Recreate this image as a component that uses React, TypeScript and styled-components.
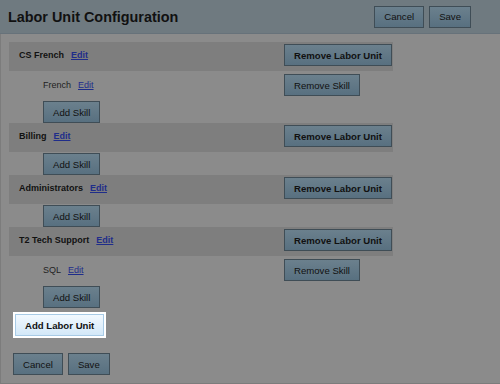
import React from "react";
import styled, { createGlobalStyle } from "styled-components";

const Global = createGlobalStyle`
  html, body {
    margin: 0;
    padding: 0;
    background: #8b8b8b;
    font-family: "Liberation Sans", Arial, sans-serif;
  }
`;

const Page = styled.div`
  width: 500px;
  height: 384px;
  display: flex;
  flex-direction: column;
  overflow: hidden;
`;

const Header = styled.div`
  height: 33px;
  flex-shrink: 0;
  display: flex;
  align-items: center;
  justify-content: space-between;
  padding: 0 29px 0 8px;
  background: #6f7a80;
  border-bottom: 1px solid #67727a;
`;

const Title = styled.h1`
  margin: 0;
  font-size: 14.4px;
  font-weight: bold;
  color: #111;
`;

const ButtonRow = styled.div`
  display: flex;
  gap: 5px;
`;

const Button = styled.button<{ $bold?: boolean; $active?: boolean }>`
  height: 22px;
  padding: 0 9px;
  font-family: "Liberation Sans", Arial, sans-serif;
  font-size: 9.6px;
  font-weight: ${(p) => (p.$bold ? "bold" : "normal")};
  color: #111;
  border: 1px solid ${(p) => (p.$active ? "#a8cbe6" : "#3f4d56")};
  background: ${(p) =>
    p.$active
      ? "linear-gradient(#f2f9ff, #d3e8f8)"
      : "linear-gradient(#6b808d, #587080)"};
  box-shadow: ${(p) => (p.$active ? "0 0 0 2px #ffffff" : "none")};
  margin-left: ${(p) => (p.$active ? "2px" : "0")};
  white-space: nowrap;
  cursor: pointer;
`;

const Content = styled.div`
  flex: 1;
  padding: 8px 0 0 8px;
  border-left: 1px solid #7c7c7c;
  border-bottom: 1px solid #7c7c7c;
`;

const GroupHeader = styled.div`
  width: 384px;
  box-sizing: border-box;
  display: flex;
  align-items: center;
  padding: 2px 0 5px 10px;
  background: #7e7e7e;
`;

const SkillRow = styled.div`
  width: 384px;
  box-sizing: border-box;
  display: flex;
  align-items: center;
  padding: 3px 0 4px 34px;
`;

const AddRow = styled.div`
  padding: 1px 0 0 34px;
  height: 23px;
  box-sizing: border-box;
`;

const Label = styled.div<{ $bold?: boolean; $indent?: boolean }>`
  width: ${(p) => (p.$indent ? "241px" : "265px")};
  display: flex;
  align-items: center;
  gap: 7px;
  font-size: 9px;
  font-weight: ${(p) => (p.$bold ? "bold" : "normal")};
  color: ${(p) => (p.$bold ? "#111" : "#222")};
`;

const EditLink = styled.a<{ $bold?: boolean }>`
  color: #1f2d8a;
  text-decoration: underline;
  font-weight: ${(p) => (p.$bold ? "bold" : "normal")};
  cursor: pointer;
`;

const Footer = styled.div`
  padding: 6px 0 0 4px;
  display: flex;
  flex-direction: column;
  align-items: flex-start;
  gap: 17px;
`;

const groups = [
  { name: "CS French", skills: ["French"] },
  { name: "Billing", skills: [] as string[] },
  { name: "Administrators", skills: [] as string[] },
  { name: "T2 Tech Support", skills: ["SQL"] },
];

export default function App() {
  return (
    <Page>
      <Global />
      <Header>
        <Title>Labor Unit Configuration</Title>
        <ButtonRow>
          <Button>Cancel</Button>
          <Button>Save</Button>
        </ButtonRow>
      </Header>
      <Content>
        {groups.map((g) => (
          <React.Fragment key={g.name}>
            <GroupHeader>
              <Label $bold>
                {g.name}
                <EditLink $bold>Edit</EditLink>
              </Label>
              <Button $bold>Remove Labor Unit</Button>
            </GroupHeader>
            {g.skills.map((s) => (
              <SkillRow key={s}>
                <Label $indent>
                  {s}
                  <EditLink>Edit</EditLink>
                </Label>
                <Button>Remove Skill</Button>
              </SkillRow>
            ))}
            <AddRow>
              <Button>Add Skill</Button>
            </AddRow>
          </React.Fragment>
        ))}
        <Footer>
          <Button $bold $active>Add Labor Unit</Button>
          <ButtonRow>
            <Button>Cancel</Button>
            <Button>Save</Button>
          </ButtonRow>
        </Footer>
      </Content>
    </Page>
  );
}
